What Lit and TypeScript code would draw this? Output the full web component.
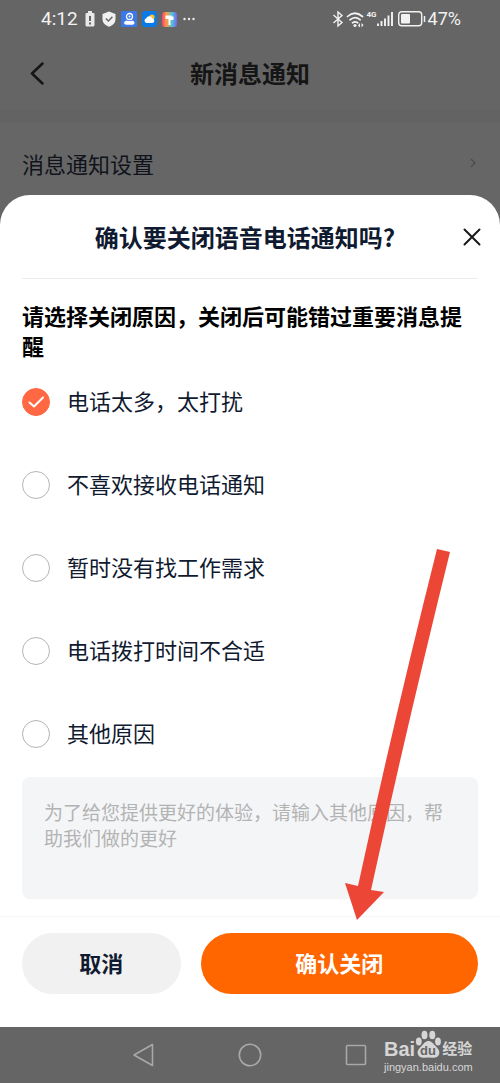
import { LitElement, html, css } from "lit";
import { customElement, state } from "lit/decorators.js";

const REASONS = [
  "电话太多，太打扰",
  "不喜欢接收电话通知",
  "暂时没有找工作需求",
  "电话拨打时间不合适",
  "其他原因",
];

@customElement("status-bar")
export class StatusBar extends LitElement {
  static styles = css`
    :host {
      display: flex;
      justify-content: space-between;
      align-items: center;
      height: 38px;
      padding: 0 39px 0 41px;
      color: #f2f2f2;
      font-family: Roboto, "Noto Sans", sans-serif;
    }
    .group {
      display: flex;
      align-items: center;
    }
    .left {
      gap: 5px;
    }
    .right {
      gap: 2px;
    }
    .time {
      font-size: 19px;
      line-height: 24px;
    }
    .percent {
      font-size: 18px;
      line-height: 24px;
    }
    .network {
      display: flex;
      align-items: flex-start;
    }
    .net {
      font-size: 8px;
      line-height: 8px;
      font-weight: 700;
    }
    svg {
      display: block;
    }
  `;

  render() {
    return html`
      <div class="group left">
        <span class="time">4:12</span>
        <svg width="14" height="18" viewBox="0 0 14 18" aria-hidden="true">
          <path d="M5 1h4v2h1.500q1 0 1 1v11q0 1.500-1.500 1.500H4q-1.500 0-1.500-1.500V4q0-1 1-1H5z" fill="#e8e8e8" />
          <path d="M7 6v5M7 12.500v2" stroke="#555" stroke-width="1.800" />
        </svg>
        <svg width="14" height="16" viewBox="0 0 14 16" aria-hidden="true">
          <path d="M7 .5 13.500 3v5c0 4-3 6.500-6.500 7.700C3.500 14.500.5 12 .5 8V3z" fill="#f0f0f0" />
          <path d="m3.800 7.500 2.600 2.600 4-4.300" fill="none" stroke="#666" stroke-width="1.400" />
        </svg>
        <svg width="16" height="16" viewBox="0 0 16 16" aria-hidden="true">
          <rect width="16" height="16" rx="1" fill="#3d78e8" />
          <circle cx="8.500" cy="5.500" r="3" fill="none" stroke="#fff" stroke-width="1.300" />
          <circle cx="8.500" cy="5.500" r="1" fill="#fff" />
          <path d="M3 12q0-2 2.500-2.500 3 1 6 0Q13.500 10 13.500 12T11 13.800H5.500Q3 13.800 3 12" fill="#fff" />
        </svg>
        <svg width="15" height="16" viewBox="0 0 15 16" aria-hidden="true">
          <rect width="15" height="16" rx="3" fill="#087be8" />
          <circle cx="10" cy="6" r="2.600" fill="#ffbf32" />
          <path d="M4.500 12a2.500 2.500 0 0 1-.3-4.800 3.500 3.500 0 0 1 6.300.3A2.300 2.300 0 0 1 10.500 12z" fill="#fff" />
        </svg>
        <svg width="15" height="15" viewBox="0 0 15 15" aria-hidden="true">
          <defs>
            <linearGradient id="hue" x1="0" y1="0" x2="1" y2="0">
              <stop offset="0" stop-color="#f0447c" />
              <stop offset=".3" stop-color="#ff9b3d" />
              <stop offset=".65" stop-color="#4dc8d8" />
              <stop offset="1" stop-color="#7b63ee" />
            </linearGradient>
          </defs>
          <rect width="15" height="15" rx="3" fill="url(#hue)" />
          <path d="M3.500 3.500h6v1h2V8H8.500v5h-2V7h-3z" fill="#fff" />
        </svg>
        <svg width="14" height="4" viewBox="0 0 14 4" aria-hidden="true">
          <circle cx="2.500" cy="2" r="1.200" fill="#eee" />
          <circle cx="7" cy="2" r="1.200" fill="#eee" />
          <circle cx="11.500" cy="2" r="1.200" fill="#eee" />
        </svg>
      </div>
      <div class="group right">
        <svg width="12" height="18" viewBox="0 0 12 18" aria-hidden="true">
          <path d="m1.500 5 8.500 7.500L6 16V2l4 3.500L1.500 13" fill="none" stroke="#f2f2f2" stroke-width="1.400" />
        </svg>
        <svg width="19" height="17" viewBox="0 0 19 17" aria-hidden="true">
          <g fill="none" stroke="#f2f2f2" stroke-width="1.700" stroke-linecap="round">
            <path d="M1.500 5.500q7-6.500 15 0M4 8.800q5-4.500 10.200 0M6.500 11.800q2.500-2 5.200 0" />
          </g>
          <circle cx="9" cy="14.500" r="1.600" fill="#f2f2f2" />
          <path d="m12 14.500 2-2.500v4.500zM17.500 14l-2-2v4.500z" fill="#f2f2f2" />
        </svg>
        <span class="network">
          <span class="net">4G</span>
          <svg width="16" height="16" viewBox="0 0 16 16" aria-hidden="true">
            <path d="M1 15v-2.500M4.500 15v-5M8 15V7.500M11.500 15V4.500M15 15V1" stroke="#f2f2f2" stroke-width="1.900" />
          </svg>
        </span>
        <svg width="31" height="16" viewBox="0 0 31 16" aria-hidden="true">
          <rect x="3.700" y=".7" width="23" height="14" rx="3" fill="none" stroke="#f2f2f2" stroke-width="1.400" />
          <rect x="6" y="3" width="9" height="9.500" rx="1" fill="#f2f2f2" />
          <path d="M29.500 5v6" stroke="#f2f2f2" stroke-width="1.500" />
        </svg>
        <span class="percent">47%</span>
      </div>
    `;
  }
}

@customElement("reason-sheet")
export class ReasonSheet extends LitElement {
  @state() private selected = 0;

  static styles = css`
    :host {
      display: flex;
      flex-direction: column;
      position: relative;
      background: #fff;
      border-radius: 30px 30px 0 0;
      color: #101a30;
    }
    .head {
      display: grid;
      grid-template-columns: 1fr auto 1fr;
      align-items: center;
      height: 83px;
      margin: 0 22px;
      border-bottom: 1px solid #ececec;
    }
    .title {
      grid-column: 2;
      margin: 0;
      padding-right: 10px;
      font-size: 24px;
      line-height: 36px;
      font-weight: 700;
    }
    .close {
      justify-self: end;
      width: 18px;
      height: 18px;
      margin-right: -3px;
      padding: 0;
      border: 0;
      background: none;
    }
    svg {
      display: block;
    }
    .body {
      display: flex;
      flex-direction: column;
      padding: 21px 22px 17px;
      border-bottom: 1px solid #f5f5f5;
    }
    .reasons {
      display: flex;
      flex-direction: column;
      gap: 53px;
      margin: 0;
      padding: 0;
      border: 0;
    }
    .prompt {
      padding: 0;
      margin-bottom: 27px;
      color: #000;
      font-size: 22px;
      line-height: 30px;
      font-weight: 700;
    }
    .reason {
      display: flex;
      align-items: center;
      gap: 17px;
      height: 30px;
      font-size: 22px;
      line-height: 30px;
    }
    .reason-text {
      padding-bottom: 4px;
    }
    .mark {
      display: grid;
      flex: none;
      width: 28px;
      height: 28px;
    }
    .mark > * {
      grid-area: 1 / 1;
    }
    .radio {
      appearance: none;
      width: 28px;
      height: 28px;
      margin: 0;
      border: 1px solid #b4b4b4;
      border-radius: 50%;
      background: #fff;
    }
    .radio:checked {
      border-color: #ff6843;
      background: #ff6843;
    }
    .tick {
      pointer-events: none;
    }
    .other {
      box-sizing: border-box;
      width: 100%;
      height: 122px;
      margin-top: 28px;
      padding: 22px;
      border: 0;
      border-radius: 8px;
      background: #f4f5f7;
      resize: none;
      color: inherit;
      font-family: inherit;
      font-size: 19px;
      line-height: 26px;
    }
    .other::placeholder {
      color: #b3b3b3;
    }
    .actions {
      display: grid;
      grid-template-columns: 4fr 7fr;
      gap: 20px;
      padding: 16px 22px 33px;
    }
    .button {
      height: 61px;
      padding: 0 0 4px;
      border: 0;
      border-radius: 31px;
      font-family: inherit;
      font-size: 22px;
      line-height: 30px;
      font-weight: 700;
    }
    .cancel {
      background: #f1f1f1;
      color: #101a30;
    }
    .confirm {
      background: #ff6600;
      color: #fff;
    }
    .arrow {
      position: absolute;
      right: 49px;
      bottom: 106px;
      pointer-events: none;
    }
  `;

  render() {
    return html`
      <header class="head">
        <h2 class="title">确认要关闭语音电话通知吗?</h2>
        <button class="close" type="button" aria-label="关闭">
          <svg width="18" height="18" viewBox="0 0 18 18">
            <path d="m1.500 1.500 15 15m0-15-15 15" stroke="#1a1a1a" stroke-width="2" stroke-linecap="round" />
          </svg>
        </button>
      </header>
      <div class="body">
        <fieldset class="reasons">
          <legend class="prompt">请选择关闭原因，关闭后可能错过重要消息提醒</legend>
          ${REASONS.map(
            (text, i) => html`
              <label class="reason">
                <span class="mark">
                  <input
                    class="radio"
                    type="radio"
                    name="reason"
                    .checked=${this.selected === i}
                    @change=${() => (this.selected = i)}
                  />
                  ${this.selected === i
                    ? html`<svg class="tick" width="28" height="28" viewBox="0 0 28 28">
                        <path d="m7.500 14.500 4.500 4 9-9" fill="none" stroke="#fff" stroke-width="2" stroke-linecap="round" stroke-linejoin="round" />
                      </svg>`
                    : ""}
                </span>
                <span class="reason-text">${text}</span>
              </label>
            `
          )}
        </fieldset>
        <textarea
          class="other"
          aria-label="其他原因"
          placeholder="为了给您提供更好的体验，请输入其他原因，帮助我们做的更好"
        ></textarea>
      </div>
      <footer class="actions">
        <button class="button cancel" type="button">取消</button>
        <button class="button confirm" type="button">确认关闭</button>
      </footer>
      <svg class="arrow" width="107" height="373" viewBox="0 0 107 373" aria-hidden="true">
        <path d="M93 1 106 4Q63 178 27 342L40 344 13 372 1 335 14 338Q50 172 93 1z" fill="#ec4637" />
      </svg>
    `;
  }
}

@customElement("nav-bar")
export class NavBar extends LitElement {
  static styles = css`
    :host {
      display: flex;
      position: relative;
      justify-content: center;
      align-items: center;
      gap: 82px;
      height: 56px;
      color: #d6d6d6;
    }
    .key {
      width: 24px;
      height: 24px;
      padding: 0;
      border: 0;
      background: none;
    }
    svg {
      display: block;
    }
    .mark {
      position: absolute;
      right: 27px;
      top: 3px;
      display: flex;
      flex-direction: column;
      width: 89px;
      white-space: nowrap;
      font-family: "Liberation Sans", "Noto Sans CJK SC", sans-serif;
    }
    .brand {
      display: flex;
      align-items: flex-end;
      height: 29px;
    }
    .bai {
      font-size: 20px;
      line-height: 20px;
      font-weight: 700;
    }
    .exp {
      font-size: 15px;
      line-height: 20px;
      font-weight: 700;
    }
    .du {
      font-size: 13px;
      font-weight: 700;
    }
    .site {
      font-size: 11px;
      line-height: 16px;
    }
  `;

  render() {
    return html`
      <button class="key" type="button" aria-label="返回">
        <svg width="24" height="24" viewBox="0 0 24 24">
          <path d="M20.500 1.500v21L2 12z" fill="none" stroke="#a8a8a8" stroke-width="1.600" stroke-linejoin="round" />
        </svg>
      </button>
      <button class="key" type="button" aria-label="主页">
        <svg width="24" height="24" viewBox="0 0 24 24">
          <circle cx="12" cy="12" r="10.700" fill="none" stroke="#a8a8a8" stroke-width="1.600" />
        </svg>
      </button>
      <button class="key" type="button" aria-label="最近任务">
        <svg width="24" height="24" viewBox="0 0 24 24">
          <rect x="2.500" y="2.500" width="19" height="19" rx="1" fill="none" stroke="#a8a8a8" stroke-width="1.600" />
        </svg>
      </button>
      <div class="mark">
        <div class="brand">
          <span class="bai">Bai</span>
          <svg width="27" height="29" viewBox="0 0 27 29">
            <g fill="#d6d6d6">
              <ellipse cx="3.800" cy="11.500" rx="2.900" ry="3.900" />
              <ellipse cx="9.500" cy="5" rx="3" ry="4.300" />
              <ellipse cx="17.300" cy="5" rx="3" ry="4.300" />
              <ellipse cx="23" cy="11.500" rx="2.900" ry="3.900" />
              <path d="M13.500 11c3 0 4.500 2.500 7 5 3.500 3.500 4.500 5.500 3.500 8.500-1 3-4 3.500-6.500 3.200q-4-.6-8 0C7 28 4 27.500 3 24.500c-1-3 0-5 3.500-8.500 2.500-2.500 4-5 7-5" />
            </g>
            <text class="du" x="5" y="25" fill="#656565">du</text>
          </svg>
          <span class="exp">经验</span>
        </div>
        <span class="site">jingyan.baidu.com</span>
      </div>
    `;
  }
}

@customElement("app-root")
export class AppRoot extends LitElement {
  static styles = css`
    :host {
      display: flex;
      flex-direction: column;
      min-height: 100vh;
      background: #656565;
      font-family: "Noto Sans CJK SC", sans-serif;
    }
    .top {
      display: grid;
      grid-template-columns: 1fr auto 1fr;
      align-items: center;
      height: 72px;
      padding: 0 28px;
      color: #151515;
    }
    .back {
      width: 20px;
      height: 24px;
      padding: 0;
      border: 0;
      background: none;
    }
    svg {
      display: block;
    }
    .heading {
      margin: 0;
      padding-bottom: 3px;
      font-size: 24px;
      line-height: 36px;
      font-weight: 700;
    }
    .list {
      flex: 1;
      padding-bottom: 30px;
      margin-bottom: -30px;
      border-top: 13px solid #636363;
      background: #666;
    }
    .row {
      display: flex;
      align-items: center;
      justify-content: space-between;
      height: 71px;
      padding: 8px 22px 0;
      box-sizing: border-box;
      color: #10131b;
      font-size: 22px;
      line-height: 30px;
      text-decoration: none;
    }
  `;

  render() {
    return html`
      <status-bar></status-bar>
      <header class="top">
        <button class="back" type="button" aria-label="返回">
          <svg width="20" height="24" viewBox="0 0 20 24">
            <path d="M14.500 1.500 4 11.500l10.500 10" fill="none" stroke="#151515" stroke-width="2.500" stroke-linecap="round" stroke-linejoin="round" />
          </svg>
        </button>
        <h1 class="heading">新消息通知</h1>
      </header>
      <main class="list">
        <a class="row" href="#settings">
          <span>消息通知设置</span>
          <svg width="10" height="10" viewBox="0 0 10 10" aria-hidden="true">
            <path d="m3 1 4 4-4 4" fill="none" stroke="#4c4c4c" stroke-width="1.300" />
          </svg>
        </a>
      </main>
      <reason-sheet></reason-sheet>
      <nav-bar></nav-bar>
    `;
  }
}
